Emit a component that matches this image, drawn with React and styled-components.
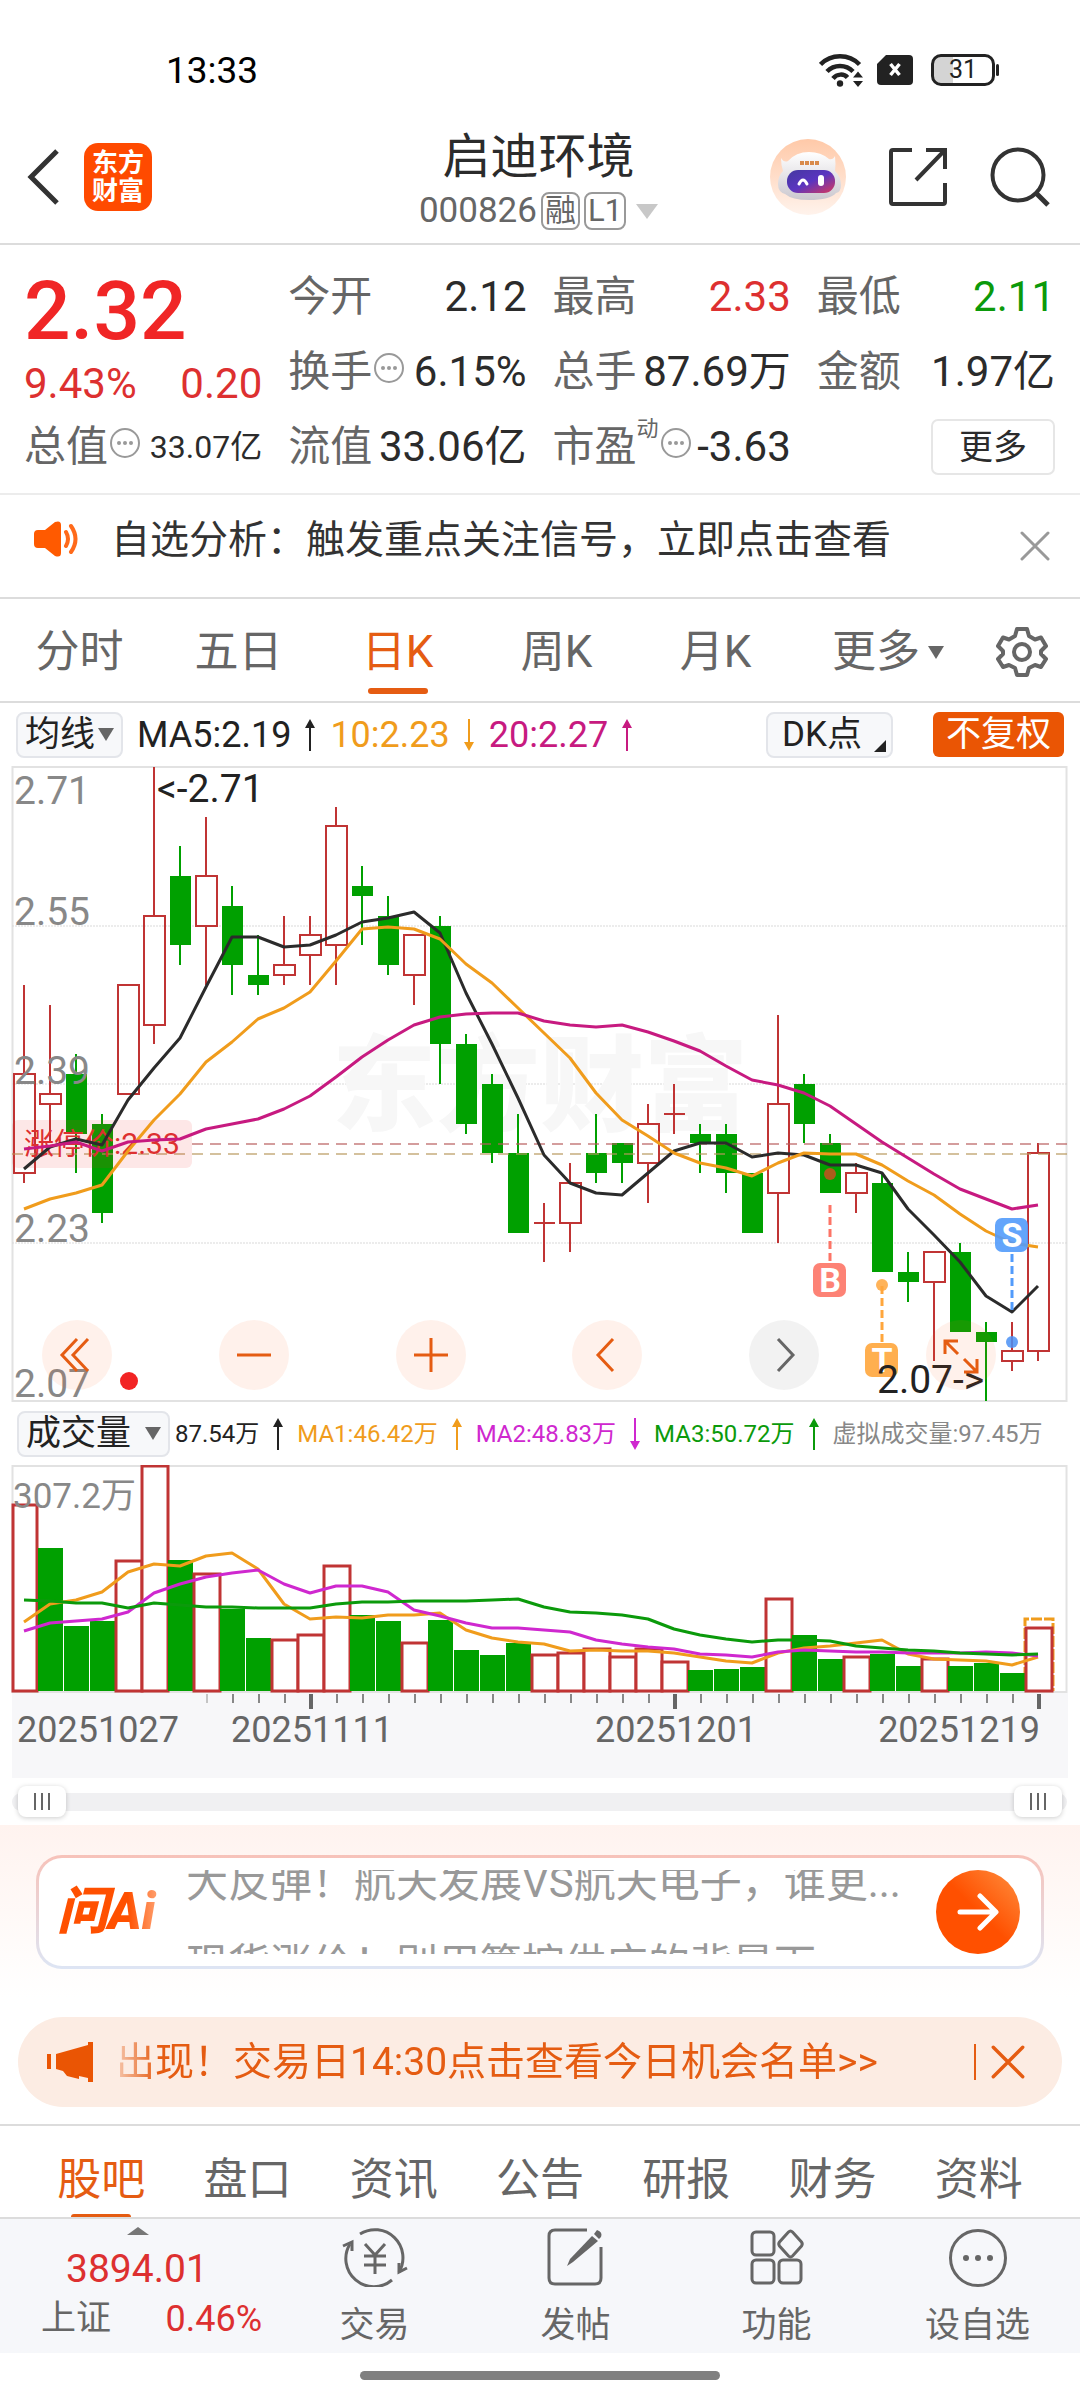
import React, { useState } from "react";
import styled, { createGlobalStyle } from "styled-components";

const GlobalStyle = createGlobalStyle`
  body {
    margin: 0;
    background-color: #fff;
    color: #2b2b2b;
    font-family: Roboto, "Noto Sans CJK SC", sans-serif;
  }

  * {
    box-sizing: border-box;
  }

  button {
    padding: 0;
    border: none;
    background: none;
    color: inherit;
    font: inherit;
    cursor: pointer;
    white-space: nowrap;
  }

  svg {
    display: block;
  }
`;

const RED = "#dd3030";
const GREEN = "#0b9a0b";
const ORANGE = "#e55c12";
const CANDLE_RED = "#c03434";
const CANDLE_GREEN = "#00a000";

/* ---------- status bar and header ---------- */

const Page = styled.div`
  display: flex;
  flex-direction: column;
  overflow: hidden;
`;

const StatusBar = styled.div`
  height: 108px;
  padding: 32px 85px 0 166px;
  display: flex;
  justify-content: space-between;
  align-items: center;
  color: #000;
  font-size: 37px;
`;

const StatusIcons = styled.div`
  display: flex;
  align-items: center;
  gap: 14px;
`;

const Battery = styled.div`
  position: relative;
  width: 64px;
  height: 32px;
  margin-left: 4px;
  border: 3px solid #222;
  border-radius: 10px;
  background: linear-gradient(90deg, #d4d4d4 32%, #fff 32%);
  color: #222;
  font-size: 25px;
  line-height: 26px;
  text-align: center;

  &::after {
    content: "";
    position: absolute;
    top: 7px;
    right: -7px;
    width: 3px;
    height: 12px;
    border-radius: 2px;
    background-color: #222;
  }
`;

const Header = styled.header`
  height: 137px;
  padding: 0 30px 0 27px;
  display: grid;
  grid-template-columns: 1fr auto 1fr;
  align-items: center;
  border-bottom: 2px solid #dcdcdc;
`;

const HeaderSide = styled.div`
  display: flex;
  align-items: center;
  gap: ${(props) => props.$gap}px;
  padding-top: 2px;
  justify-content: ${(props) => (props.$right ? "flex-end" : "flex-start")};
`;

const AppLogo = styled.div`
  width: 68px;
  height: 68px;
  border-radius: 14px;
  background-color: #ff4a00;
  color: #fff;
  font-size: 26px;
  font-weight: 700;
  line-height: 28px;
  text-align: center;
  display: grid;
  place-content: center;
`;

const TitleBlock = styled.div`
  padding-top: 11px;
  display: flex;
  flex-direction: column;
  align-items: center;
`;

const Title = styled.h1`
  margin: 0;
  font-size: 48px;
  font-weight: 400;
  line-height: 60px;
`;

const Code = styled.button`
  display: flex;
  align-items: center;
  gap: 4px;
  color: #666;
  font-size: 35px;
  line-height: 48px;
`;

const CodeTag = styled.span`
  height: 38px;
  padding: 0 2px;
  border: 2px solid #999;
  border-radius: 8px;
  font-size: 31px;
  line-height: 34px;
`;

const CodeArrow = styled.span`
  margin-left: 6px;
  border: 11px solid transparent;
  border-top: 15px solid #c8c8c8;
  border-bottom: 0;
`;

/* ---------- quote ---------- */

const Quote = styled.section`
  padding: 14px 25px 9px 24px;
  display: grid;
  grid-template-columns: 238fr 238fr 238fr 238fr;
  grid-template-rows: repeat(3, 75px);
  column-gap: 26px;
  border-bottom: 2px solid #ececec;
`;

const PriceBlock = styled.div`
  grid-row: span 2;
  display: flex;
  flex-direction: column;
  justify-content: space-between;
  color: ${RED};
  font-size: 42px;
  line-height: 48px;
`;

const Price = styled.strong`
  padding-top: 16px;
  color: #f02626;
  font-size: 82px;
  font-weight: 500;
  line-height: 72px;
`;

const PriceChange = styled.div`
  padding-bottom: 1px;
  display: flex;
  justify-content: space-between;
`;

const Cell = styled.div`
  display: flex;
  align-items: center;
  white-space: nowrap;
  color: #666;
  font-size: 42px;
  line-height: 56px;

  svg {
    flex: none;
  }
`;

const CellValue = styled.span`
  margin-left: auto;
  color: ${(props) => props.$color || "#2b2b2b"};
  font-size: ${(props) => (props.$small ? 32 : 42)}px;
`;

const Sup = styled.sup`
  align-self: flex-start;
  font-size: 22px;
  line-height: 40px;
`;

const MoreButton = styled.button`
  width: 124px;
  height: 56px;
  margin-left: auto;
  border: 2px solid #e6e6e6;
  border-radius: 7px;
  color: #2b2b2b;
  font-size: 34px;
  line-height: 50px;
`;

/* ---------- alert row ---------- */

const Alert = styled.section`
  height: 104px;
  padding: 0 30px 0 32px;
  display: flex;
  align-items: center;
  border-bottom: 2px solid #dcdcdc;
`;

const AlertText = styled.a`
  flex: 1;
  padding: 0 0 13px 31px;
  color: #333;
  font-size: 39px;
  line-height: 54px;
  text-decoration: none;
  white-space: nowrap;
`;

const AlertSpeaker = styled.span`
  padding-bottom: 14px;
`;

const AlertClose = styled.button`
  color: #999;
`;

/* ---------- period tabs ---------- */

const PeriodTabs = styled.nav`
  height: 104px;
  display: grid;
  grid-template-columns: repeat(5, 159fr) 168fr 117fr;
  border-bottom: 2px solid #dcdcdc;
`;

const PeriodTab = styled.button`
  position: relative;
  display: flex;
  align-items: center;
  justify-content: center;
  gap: 8px;
  padding-top: 4px;
  padding-left: ${(props) => (props.$wide ? 18 : 0)}px;
  color: ${(props) => (props.$active ? ORANGE : "#666")};
  font-size: 44px;
  line-height: 60px;

  &::after {
    content: "";
    display: ${(props) => (props.$active ? "block" : "none")};
    position: absolute;
    bottom: 7px;
    width: 60px;
    height: 6px;
    border-radius: 3px;
    background-color: ${ORANGE};
  }
`;

const Caret = styled.span`
  border: 8px solid transparent;
  border-top: 13px solid #666;
  border-bottom: 0;
`;

/* ---------- indicator rows ---------- */

const IndicatorRow = styled.div`
  height: 63px;
  padding: 0 16px;
  display: flex;
  align-items: center;
  gap: 14px;
  font-size: 36px;
  line-height: 44px;
  white-space: nowrap;
`;

const VolumeRow = styled(IndicatorRow)`
  padding: 0 0 0 17px;
  gap: 5px;
  font-size: 24px;
`;

const SmallButton = styled.button`
  height: 46px;
  padding: 0 7px;
  display: flex;
  align-items: center;
  gap: ${(props) => props.$gap || 0}px;
  border: 2px solid #e3e5ea;
  border-radius: 8px;
  background-color: #f7f8fa;
  color: #222;
  font-size: 35px;
  line-height: 42px;
`;

const DkButton = styled(SmallButton)`
  margin-left: auto;
  padding: 0 5px 0 14px;
`;

const DkCorner = styled.span`
  align-self: flex-end;
  margin: 0 0 4px 12px;
  border-left: 12px solid transparent;
  border-bottom: 12px solid #222;
`;

const AdjustButton = styled.button`
  height: 45px;
  margin-left: 26px;
  padding: 0 13px;
  border-radius: 6px;
  background-color: #ea5504;
  color: #fff;
  font-size: 35px;
  line-height: 45px;
`;

const Indicator = styled.span`
  display: flex;
  align-items: center;
  gap: 13px;
  color: ${(props) => props.$color};
`;

const VolumeIndicators = styled.div`
  flex: 1;
  display: flex;
  gap: 13px;
`;

/* ---------- charts ---------- */

const ChartArea = styled.div`
  position: relative;

  > svg {
    width: 100%;
    height: auto;
  }
`;

const ChartTools = styled.div`
  position: absolute;
  left: 42px;
  right: 84px;
  bottom: 12px;
  display: flex;
  justify-content: space-between;
`;

const ToolButton = styled.button`
  width: 70px;
  height: 70px;
  border-radius: 50%;
  display: grid;
  place-items: center;
  background-color: ${(props) => (props.$muted ? "rgba(0, 0, 0, 0.05)" : "rgba(255, 100, 30, 0.09)")};
  color: ${(props) => (props.$muted ? "#666" : ORANGE)};
`;

const RangeBar = styled.div`
  position: relative;
  height: 47px;
  margin: 0 13px 0 12px;
  display: flex;
  align-items: center;
`;

const RangeTrack = styled.div`
  width: 100%;
  height: 18px;
  border-radius: 9px;
  background-color: #f0f0f2;
`;

const RangeInput = styled.input`
  position: absolute;
  left: 6px;
  width: calc(100% - 11px);
  height: 47px;
  margin: 0;
  appearance: none;
  background: none;
  pointer-events: none;

  &::-webkit-slider-thumb {
    appearance: none;
    pointer-events: auto;
    width: 48px;
    height: 31px;
    border-radius: 8px;
    box-shadow: 0 1px 5px rgba(0, 0, 0, 0.2);
    background:
      linear-gradient(#666, #666) 16px 7px / 2px 17px no-repeat,
      linear-gradient(#666, #666) 23px 7px / 2px 17px no-repeat,
      linear-gradient(#666, #666) 30px 7px / 2px 17px no-repeat,
      #fff;
  }
`;

/* ---------- ask AI ---------- */

const AskSection = styled.section`
  padding: 30px 36px 48px;
  background: linear-gradient(#fff3ef, #fff 90%);
`;

const AskBox = styled.div`
  height: 114px;
  padding: 0 21px 0 18px;
  display: flex;
  align-items: center;
  border: 3px solid transparent;
  border-radius: 26px;
  background:
    linear-gradient(#fff, #fff) padding-box,
    linear-gradient(#f7c2b9, #dde5f4) border-box;
`;

const AskLogo = styled.span`
  width: 129px;
  font-size: 51px;
  font-style: italic;
  font-weight: 900;
  line-height: 60px;
  white-space: nowrap;
  color: transparent;
  background: linear-gradient(90deg, #ff5000 55%, #ff9a66 76%);
  background-clip: text;
`;

const AskTicker = styled.div`
  flex: 1;
  height: 84px;
  overflow: hidden;
  color: #999;
  font-size: 42px;
  line-height: 82px;
  white-space: nowrap;
`;

const AskLine = styled.p`
  margin: 0;

  &:first-child {
    margin-top: -28px;
  }
`;

const AskButton = styled.button`
  width: 84px;
  height: 84px;
  border-radius: 50%;
  display: grid;
  place-items: center;
  background: linear-gradient(45deg, #ff5000 50%, #ff9040);
  color: #fff;
`;

/* ---------- orange banner ---------- */

const Banner = styled.section`
  height: 90px;
  margin: 0 18px 17px;
  padding: 0 37px 0 29px;
  display: flex;
  align-items: center;
  border-radius: 45px;
  background-color: #fcece3;
  color: ${ORANGE};
`;

const BannerText = styled.a`
  flex: 1;
  padding-left: 23px;
  color: inherit;
  font-size: 39px;
  line-height: 56px;
  text-decoration: none;
  white-space: nowrap;
  mask-image: linear-gradient(90deg, rgba(0, 0, 0, 0.2) 20px, #000 64px);
`;

const BannerLine = styled.span`
  width: 2px;
  height: 36px;
  margin-right: 15px;
  background-color: ${ORANGE};
`;

/* ---------- bottom ---------- */

const InfoTabs = styled.nav`
  height: 93px;
  padding: 0 28px;
  display: grid;
  grid-template-columns: repeat(7, 1fr);
  overflow: hidden;
  border-top: 2px solid #dcdcdc;
`;

const InfoTab = styled.button`
  position: relative;
  display: flex;
  justify-content: center;
  padding-top: 22px;
  color: ${(props) => (props.$active ? ORANGE : "#666")};
  font-size: 44px;
  line-height: 64px;

  &::after {
    content: "";
    display: ${(props) => (props.$active ? "block" : "none")};
    position: absolute;
    bottom: -3px;
    width: 60px;
    height: 6px;
    border-radius: 3px;
    background-color: ${ORANGE};
  }
`;

const BottomBar = styled.footer`
  height: 136px;
  display: grid;
  grid-template-columns: 274fr repeat(4, 201fr) 2fr;
  border-top: 2px solid #dcdcdc;
  background-color: #f6f7fa;
`;

const IndexBlock = styled.button`
  padding: 8px 11px 0 41px;
  display: flex;
  flex-direction: column;
  align-items: flex-start;
  color: ${RED};
  font-size: 39px;
  line-height: 50px;

  > svg {
    margin-left: 86px;
  }
`;

const IndexValue = styled.span`
  padding: 9px 0 0 25px;
`;

const IndexLine = styled.span`
  width: 221px;
  display: flex;
  justify-content: space-between;
  font-size: 36px;
`;

const IndexName = styled.span`
  color: #666;
  font-size: 35px;
`;

const BottomItem = styled.button`
  padding-top: 8px;
  display: flex;
  flex-direction: column;
  align-items: center;
  gap: 14px;
  color: #666;
  font-size: 35px;
  line-height: 50px;
`;

const HomeIndicator = styled.div`
  width: 360px;
  height: 9px;
  margin: 18px auto 21px;
  border-radius: 5px;
  background-color: #808080;
`;

/* ---------- data ---------- */

// open, close, high, low in cents, volume in 万
const DAYS = [
  [230, 240, 249, 229, 254], [237, 238, 247, 233, 195], [240, 234, 242, 230, 88.5], [235, 226, 236, 225, 95],
  [238, 249, 249, 238, 179], [245, 256, 271, 243, 307.2], [260, 253, 263, 251, 179], [255, 260, 266, 249, 160],
  [257, 251, 259, 248, 111], [250, 249, 254, 248, 72], [250, 251, 256, 249, 71], [252, 254, 256, 249, 78],
  [253, 265, 267, 249, 172], [259, 258, 261, 253, 103], [256, 251, 258, 250, 95], [250, 254, 254, 247, 67],
  [255, 243, 256, 239, 96], [243, 235, 244, 234, 56], [239, 232, 240, 231, 49.5], [232, 224, 236, 224, 65],
  [225, 225, 227, 221, 51], [225, 229, 231, 222, 53.5], [232, 230, 236, 229, 59], [233, 231, 233, 229, 47],
  [231, 235, 237, 227, 59], [236, 236, 239, 234, 40.4], [234, 233, 235, 230, 29], [234, 230, 235, 228, 30.4],
  [230, 224, 230, 224, 32.2], [228, 237, 246, 223, 127], [239, 235, 240, 233, 75.8], [233, 228, 234, 228, 43.6],
  [228, 230, 231, 226, 48], [229, 220, 230, 220, 51], [220, 219, 222, 217, 33.6], [219, 222, 222, 211, 45],
  [222, 214, 223, 214, 34.5], [214, 213, 215, 207, 38], [211, 212, 215, 210, 24.5], [212, 232, 233, 211, 87.5],
];

// averages of the first days, which reach back before the first candle
const PRICE_LEAD = {
  5: [230.4, 232.6, 233.4, 232.8],
  10: [226.4, 227.4, 228, 228.8, 232.2, 235.4, 238, 241.2, 243.2],
  20: [232.4, 232.7, 233.1, 232.2, 233.1, 233.3, 233.4, 234.5, 235, 235.5, 236.5, 237.8, 239.7, 241.7, 243.4, 245, 245.8, 246.1, 246.2],
};

const VOLUME_LEAD = {
  5: [94, 119, 124, 135],
  10: [81, 92, 95, 98.5, 108, 133, 145, 155, 161],
  20: [123.4, 122, 120, 120, 113, 120, 117, 115, 115, 113.5, 112.5, 112.5, 119, 120.7, 121, 122, 123, 123, 123.4],
};

const dayX = (i) => 24 + i * 26;
const priceY = (p) => Math.round(635 - (p - 207) * 9.906);
const volumeY = (v) => Math.round(226 - v * 0.7346);

function averagePoints(values, size, lead, toY) {
  return values
    .map((_, i) => {
      const avg =
        i < lead.length ? lead[i] : values.slice(i - size + 1, i + 1).reduce((a, b) => a + b, 0) / size;
      return `${dayX(i)},${toY(avg)}`;
    })
    .join(" ");
}

const closes = DAYS.map((d) => d[1]);
const volumes = DAYS.map((d) => d[4]);

/* ---------- drawings ---------- */

function Candle({ day, index }) {
  const [open, close, high, low] = day;
  const x = dayX(index);
  const up = close >= open;
  const color = up ? CANDLE_RED : CANDLE_GREEN;
  const top = priceY(Math.max(open, close));
  const bottom = priceY(Math.min(open, close));
  return (
    <g stroke={color} strokeWidth="2">
      <line x1={x} x2={x} y1={priceY(high)} y2={top} />
      <line x1={x} x2={x} y1={bottom} y2={priceY(low)} />
      {open === close ? (
        <line x1={x - 10} x2={x + 11} y1={top} y2={top} />
      ) : up ? (
        <rect x={x - 10} y={top} width="21" height={bottom - top} fill="none" />
      ) : (
        <rect x={x - 10} y={top} width="21" height={bottom - top} fill={color} stroke="none" />
      )}
    </g>
  );
}

function Marker({ letter, x, y, color, dotY, dotColor, from, to }) {
  return (
    <g>
      <line x1={x} x2={x} y1={from} y2={to} stroke={color} strokeWidth="3" strokeDasharray="8 4" />
      <circle cx={x} cy={dotY} r="6" fill={dotColor} fillOpacity="0.85" />
      <rect x={x - 17} y={y - 17} width="33" height="34" rx="7" fill={color} fillOpacity="0.9" />
      <text x={x} y={y + 12} fill="#fff" fontSize="34" fontWeight="700" textAnchor="middle">
        {letter}
      </text>
    </g>
  );
}

function PriceChart() {
  return (
    <svg viewBox="0 0 1080 636">
      <rect x="12.5" y="1" width="1054" height="634" fill="none" stroke="#e2e2e2" strokeWidth="2" />
      {[255, 239, 223].map((p) => (
        <line key={p} x1="12" x2="1067" y1={priceY(p)} y2={priceY(p)} stroke="#d9d9d9" strokeDasharray="2 1" />
      ))}
      <text x="332" y="357" fontSize="104" fontWeight="900" fill="#f7f7f7">东方财富</text>
      {DAYS.map((day, i) => (
        <Candle key={i} day={day} index={i} />
      ))}
      <line x1="192" x2="1067" y1="378" y2="378" stroke="#b85c5c" strokeOpacity="0.6" strokeWidth="2" strokeDasharray="11 7" />
      <line x1="12" x2="1067" y1="388" y2="388" stroke="#b8985c" strokeOpacity="0.6" strokeWidth="2" strokeDasharray="11 7" />
      <rect x="12" y="354" width="180" height="48" rx="6" fill="#f02020" fillOpacity="0.11" />
      <text x="24" y="388" fontSize="30" fill={RED}>涨停价:2.33</text>
      <g fill="none" strokeWidth="3" strokeLinejoin="round">
        <polyline points={averagePoints(closes, 5, PRICE_LEAD[5], priceY)} stroke="#2b2b2b" />
        <polyline points={averagePoints(closes, 10, PRICE_LEAD[10], priceY)} stroke="#f09c1c" />
        <polyline points={averagePoints(closes, 20, PRICE_LEAD[20], priceY)} stroke="#c71a80" />
      </g>
      <g fontSize="39" fill="#888">
        <text x="14" y="38">2.71</text>
        <text x="14" y="159">2.55</text>
        <text x="14" y="318">2.39</text>
        <text x="14" y="476">2.23</text>
        <text x="14" y="631">2.07</text>
      </g>
      <text x="157" y="36" fontSize="39" fill="#222">&lt;-2.71</text>
      <Marker letter="B" x={830} y={514} color="#fd7466" from={439} to={496} dotY={408} dotColor="#c94f20" />
      <Marker letter="T" x={882} y={594} color="#ffa63c" from={520} to={576} dotY={519} dotColor="#ffa63c" />
      <Marker letter="S" x={1012} y={469} color="#529bfb" from={488} to={546} dotY={576} dotColor="#4a90f5" />
      <text x="877" y="627" fontSize="39" fill="#222">2.07-&gt;</text>
      <circle cx="129" cy="615" r="9" fill="#f22424" />
    </svg>
  );
}

function VolumeChart() {
  return (
    <svg viewBox="0 0 1080 313">
      <rect x="12" y="228" width="1056" height="85" fill="#f7f7f9" />
      <rect x="12.5" y="1" width="1054" height="226" fill="none" stroke="#e2e2e2" strokeWidth="2" />
      <path d="M1025 226 V154 H1053 V226" fill="none" stroke="#f09c1c" strokeWidth="3" strokeDasharray="11 2" />
      {DAYS.map((day, i) => {
        const x = dayX(i);
        const y = volumeY(day[4]);
        const up = i === 0 || day[1] >= DAYS[i - 1][1];
        return up ? (
          <rect key={i} x={Math.max(x - 12, 13)} y={y + 1} width={i ? 26 : 24} height={225 - y} fill="#fff" stroke={CANDLE_RED} strokeWidth="3" />
        ) : (
          <rect key={i} x={x - 12} y={y} width="25" height={226 - y} fill={CANDLE_GREEN} />
        );
      })}
      <g fill="none" strokeWidth="3" strokeLinejoin="round">
        <polyline points={averagePoints(volumes, 5, VOLUME_LEAD[5], volumeY)} stroke="#f09c1c" />
        <polyline points={averagePoints(volumes, 10, VOLUME_LEAD[10], volumeY)} stroke="#cf28cf" />
        <polyline points={averagePoints(volumes, 20, VOLUME_LEAD[20], volumeY)} stroke="#0b9a0b" />
      </g>
      <text x="13" y="43" fontSize="35" fill="#888">307.2万</text>
      {DAYS.map((_, i) => {
        if (i < 7) return null;
        const major = i === 11 || i === 25 || i === 39;
        return (
          <line key={i} x1={dayX(i) + 1} x2={dayX(i) + 1} y1="229" y2={major ? 244 : 238} stroke={i === 7 ? "#c4c4c4" : major ? "#666" : "#888"} strokeWidth={major ? 4 : 2} />
        );
      })}
      <g fontSize="36" fill="#666">
        <text x="17" y="277">20251027</text>
        <text x="231" y="277">20251111</text>
        <text x="595" y="277">20251201</text>
        <text x="1040" y="277" textAnchor="end">20251219</text>
      </g>
    </svg>
  );
}

function Arrow({ down }) {
  return (
    <svg width="12" height="34" viewBox="0 0 12 34">
      {down ? (
        <path d="M5 1h2v23h4l-5 9-5-9h4z" fill="currentColor" />
      ) : (
        <path d="M5 33h2V10h4L6 1 1 10h4z" fill="currentColor" />
      )}
    </svg>
  );
}

function InfoDots() {
  return (
    <svg width="32" height="40" viewBox="0 0 32 40" fill="#999">
      <circle cx="17" cy="16" r="14" fill="none" stroke="#999" strokeWidth="2" />
      <circle cx="11" cy="16" r="2" />
      <circle cx="17" cy="16" r="2" />
      <circle cx="23" cy="16" r="2" />
    </svg>
  );
}

function Cross({ size }) {
  return (
    <svg width={size} height={size} viewBox="0 0 30 30" stroke="currentColor" strokeWidth="3" strokeLinecap="round">
      <path d="M2 2 28 28M28 2 2 28" />
    </svg>
  );
}

function WifiIcon() {
  return (
    <svg width="44" height="34" viewBox="0 0 44 34" fill="none" stroke="#222" strokeWidth="4.5">
      <path d="M1.500 11.500C12 0.500 30 0.500 40.500 11.500" />
      <path d="M8 18.500C15 11 27 11 34 18.500" />
      <path d="M14 25.500C18 20.500 25 20.500 28.500 24.500" />
      <circle cx="21" cy="30.500" r="3.200" fill="#222" stroke="none" />
      <path d="M34 24.500 39 18.500 44 24.500zM34 28 39 34 44 28z" fill="#222" stroke="none" />
    </svg>
  );
}

function SimIcon() {
  return (
    <svg width="36" height="30" viewBox="0 0 36 30">
      <path d="M9 0H32Q36 0 36 4V26Q36 30 32 30H4Q0 30 0 26V9z" fill="#222" />
      <path d="M13.500 9 22.500 20M22.500 9 13.500 20" stroke="#fff" strokeWidth="3.500" />
    </svg>
  );
}

function RobotIcon() {
  return (
    <svg width="76" height="76" viewBox="0 0 76 76">
      <defs>
        <linearGradient id="halo" x1="0" y1="0" x2="0" y2="1">
          <stop offset="0" stopColor="#ffc9a8" />
          <stop offset="1" stopColor="#fff3ec" />
        </linearGradient>
        <linearGradient id="visor" x1="0" y1="0" x2="1" y2="1">
          <stop offset="0" stopColor="#4438a0" />
          <stop offset="0.5" stopColor="#5a35c0" />
          <stop offset="1" stopColor="#d8385c" />
        </linearGradient>
        <linearGradient id="helmet" x1="0" y1="0" x2="0" y2="1">
          <stop offset="0" stopColor="#ffffff" />
          <stop offset="1" stopColor="#cbc8cf" />
        </linearGradient>
      </defs>
      <circle cx="38" cy="38" r="38" fill="url(#halo)" />
      <path d="M11 19Q14 24 18 22Q26 13 39 13Q51 13 59 20Q63 21 65 17Q66 25 65 32Q71 38 71 46Q71 53 66 54Q60 61 39 61Q22 61 15 55Q8 53 8 45Q8 37 13 32Q11 26 11 19Z" fill="url(#helmet)" />
      <rect x="17" y="31" width="48" height="23" rx="11" fill="url(#visor)" />
      <path d="M29 45Q33 37 37 45" fill="none" stroke="#fff" strokeWidth="3" strokeLinecap="round" />
      <rect x="48" y="36" width="6" height="11" rx="3" fill="#fff" />
      <path d="M30 24H49" stroke="#d98a4a" strokeWidth="4" strokeDasharray="4 1" />
    </svg>
  );
}

function ShareIcon() {
  return (
    <svg width="60" height="60" viewBox="0 0 60 60" fill="none" stroke="#333" strokeWidth="4">
      <path d="M24 3H5Q3 3 3 5V55Q3 57 5 57H55Q57 57 57 55V36" />
      <path d="M38 3H57V22M57 3 28 33" />
    </svg>
  );
}

function SearchIcon() {
  return (
    <svg width="60" height="60" viewBox="0 0 60 60" fill="none" stroke="#333" strokeWidth="4">
      <circle cx="28" cy="28" r="25.500" />
      <path d="M46 46 58 58" strokeWidth="5" />
    </svg>
  );
}

function GearIcon() {
  return (
    <svg width="52" height="52" viewBox="0 0 52 52" fill="none" stroke="#666" strokeWidth="4" strokeLinejoin="round">
      <path d="M21 3H31L33 10L39 13.500L45 11.500L50 20L45 25V28L50 33L45 41L39 39L33 42L31 49H21L19 42L13 39L7 41L2 33L7 28V25L2 20L7 11.500L13 13.500L19 10Z" />
      <circle cx="26" cy="26" r="8" />
    </svg>
  );
}

function SpeakerIcon() {
  return (
    <svg width="48" height="38" viewBox="0 0 48 38">
      <path d="M6 10H13L23 2Q29 0 29 5V33Q29 38 23 36L13 28H6Q2 28 2 24V14Q2 10 6 10Z" fill="#ff5a00" />
      <path d="M34 12Q38 19 34 26M39 6Q48 19 39 32" fill="none" stroke="#ff6a1a" strokeWidth="4" strokeLinecap="round" />
    </svg>
  );
}

function MegaphoneIcon() {
  return (
    <svg width="46" height="40" viewBox="0 0 46 40" fill="#ea5504">
      <path d="M0 12H4V27H0zM9 12 41 3V0H46V40H41V36L32 34V37L20 34L16 29L9 27Z" />
    </svg>
  );
}

function ToolIcon({ name }) {
  const paths = {
    first: "M19 3 4 19 19 35M30 3 15 19 30 35",
    minus: "M2 19H36",
    plus: "M2 19H36M19 2V36",
    prev: "M25 3 10 19 25 35",
    next: "M13 3 28 19 13 35",
    expand: "M3 18V5H16M3 5 16 18M35 23V36H22M35 36 22 23",
  };
  return (
    <svg width="38" height="38" viewBox="0 0 38 38" fill="none" stroke="currentColor" strokeWidth="3">
      <path d={paths[name]} />
    </svg>
  );
}

function BottomIcon({ name }) {
  return (
    <svg width="66" height="60" viewBox="0 0 66 60" fill="none" stroke="#666" strokeWidth="3">
      {name === "trade" && (
        <>
          <path d="M18 7A28 28 0 0 1 57 45M50 53A28 28 0 0 1 8 17" />
          <path d="M1 19 10 15V24M65 41 57 45V36" />
          <path d="M23 17 33 28 43 17M22 29H44M22 38H44M33 28V47" />
        </>
      )}
      {name === "post" && (
        <>
          <path d="M44 3H12Q6 3 6 9V51Q6 57 12 57H52Q58 57 58 51V20" />
          <path d="M49 9 55 14 30 35 24 39 27 32Z" fill="#666" stroke="none" />
          <path d="M51 7 54 3Q60 5 58 10L56 12Z" fill="#666" stroke="none" />
        </>
      )}
      {name === "more" && (
        <>
          <rect x="8" y="5" width="22" height="23" rx="4" />
          <rect x="8" y="33" width="22" height="23" rx="4" />
          <rect x="35" y="33" width="22" height="23" rx="4" />
          <path d="M44.500 5Q46.500 3 48.500 5L57.500 15Q59 17 57.500 19L48.500 29Q46.500 31 44.500 29L35.500 19Q34 17 35.500 15Z" />
        </>
      )}
      {name === "add" && (
        <>
          <circle cx="33" cy="31" r="27.500" />
          <g fill="#666" stroke="none">
            <circle cx="21" cy="31" r="3" />
            <circle cx="33" cy="31" r="3" />
            <circle cx="45" cy="31" r="3" />
          </g>
        </>
      )}
    </svg>
  );
}

/* ---------- page ---------- */

const PERIODS = ["分时", "五日", "日K", "周K", "月K"];
const INFO = ["股吧", "盘口", "资讯", "公告", "研报", "财务", "资料"];
const TOOLS = [
  ["first", "最早"],
  ["minus", "缩小"],
  ["plus", "放大"],
  ["prev", "向前"],
  ["next", "向后"],
  ["expand", "全屏"],
];
const ACTIONS = [
  ["trade", "交易"],
  ["post", "发帖"],
  ["more", "功能"],
  ["add", "设自选"],
];

function QuotePanel() {
  return (
    <Quote>
      <PriceBlock>
        <Price>2.32</Price>
        <PriceChange>
          <span>9.43%</span>
          <span>0.20</span>
        </PriceChange>
      </PriceBlock>
      <Cell>今开<CellValue>2.12</CellValue></Cell>
      <Cell>最高<CellValue $color={RED}>2.33</CellValue></Cell>
      <Cell>最低<CellValue $color={GREEN}>2.11</CellValue></Cell>
      <Cell>换手<InfoDots /><CellValue>6.15%</CellValue></Cell>
      <Cell>总手<CellValue>87.69万</CellValue></Cell>
      <Cell>金额<CellValue>1.97亿</CellValue></Cell>
      <Cell>总值<InfoDots /><CellValue $small>33.07亿</CellValue></Cell>
      <Cell>流值<CellValue>33.06亿</CellValue></Cell>
      <Cell>市盈<Sup>动</Sup><InfoDots /><CellValue>-3.63</CellValue></Cell>
      <Cell><MoreButton>更多</MoreButton></Cell>
    </Quote>
  );
}

function App() {
  const [period, setPeriod] = useState("日K");
  const [info, setInfo] = useState("股吧");

  return (
    <Page>
      <GlobalStyle />
      <StatusBar>
        <span>13:33</span>
        <StatusIcons>
          <WifiIcon />
          <SimIcon />
          <Battery>31</Battery>
        </StatusIcons>
      </StatusBar>

      <Header>
        <HeaderSide $gap={24}>
          <button aria-label="返回">
            <svg width="33" height="56" viewBox="0 0 33 56" fill="none" stroke="#333" strokeWidth="5">
              <path d="M30 2 4 28 30 54" />
            </svg>
          </button>
          <AppLogo>
            <span>东方</span>
            <span>财富</span>
          </AppLogo>
        </HeaderSide>
        <TitleBlock>
          <Title>启迪环境</Title>
          <Code>
            000826
            <CodeTag>融</CodeTag>
            <CodeTag>L1</CodeTag>
            <CodeArrow />
          </Code>
        </TitleBlock>
        <HeaderSide $gap={42} $right>
          <button aria-label="智能助手"><RobotIcon /></button>
          <button aria-label="分享"><ShareIcon /></button>
          <button aria-label="搜索"><SearchIcon /></button>
        </HeaderSide>
      </Header>

      <QuotePanel />

      <Alert>
        <AlertSpeaker><SpeakerIcon /></AlertSpeaker>
        <AlertText href="#signal">自选分析：触发重点关注信号，立即点击查看</AlertText>
        <AlertClose aria-label="关闭"><Cross size={30} /></AlertClose>
      </Alert>

      <PeriodTabs>
        {PERIODS.map((name) => (
          <PeriodTab key={name} $active={period === name} onClick={() => setPeriod(name)}>
            {name}
          </PeriodTab>
        ))}
        <PeriodTab $wide>更多<Caret /></PeriodTab>
        <PeriodTab aria-label="设置"><GearIcon /></PeriodTab>
      </PeriodTabs>

      <IndicatorRow>
        <SmallButton $gap={3}>均线<Caret /></SmallButton>
        <Indicator $color="#222">MA5:2.19<Arrow /></Indicator>
        <Indicator $color="#f09c1c">10:2.23<Arrow down /></Indicator>
        <Indicator $color="#c71a80">20:2.27<Arrow /></Indicator>
        <DkButton>DK点<DkCorner /></DkButton>
        <AdjustButton>不复权</AdjustButton>
      </IndicatorRow>

      <ChartArea>
        <PriceChart />
        <ChartTools>
          {TOOLS.map(([name, label]) => (
            <ToolButton key={name} aria-label={label} $muted={name === "next"}>
              <ToolIcon name={name} />
            </ToolButton>
          ))}
        </ChartTools>
      </ChartArea>

      <VolumeRow>
        <SmallButton $gap={14}>成交量<Caret /></SmallButton>
        <VolumeIndicators>
          <Indicator $color="#222">87.54万<Arrow /></Indicator>
          <Indicator $color="#f09c1c">MA1:46.42万<Arrow /></Indicator>
          <Indicator $color="#cf28cf">MA2:48.83万<Arrow down /></Indicator>
          <Indicator $color={GREEN}>MA3:50.72万<Arrow /></Indicator>
          <Indicator $color="#888">虚拟成交量:97.45万</Indicator>
        </VolumeIndicators>
      </VolumeRow>

      <ChartArea>
        <VolumeChart />
      </ChartArea>

      <RangeBar>
        <RangeTrack />
        <RangeInput type="range" aria-label="开始日期" defaultValue="0" />
        <RangeInput type="range" aria-label="结束日期" defaultValue="100" />
      </RangeBar>

      <AskSection>
        <AskBox>
          <AskLogo>问Ai</AskLogo>
          <AskTicker>
            <AskLine>大反弹！航天发展VS航天电子，谁更...</AskLine>
            <AskLine>现货涨价！别用算控供应的背景下</AskLine>
          </AskTicker>
          <AskButton aria-label="提问">
            <svg width="42" height="38" viewBox="0 0 42 38" fill="none" stroke="#fff" strokeWidth="5" strokeLinecap="round" strokeLinejoin="round">
              <path d="M3 19H38M23 3 39 19 23 35" />
            </svg>
          </AskButton>
        </AskBox>
      </AskSection>

      <Banner>
        <MegaphoneIcon />
        <BannerText href="#chance">出现！交易日14:30点击查看今日机会名单&gt;&gt;</BannerText>
        <BannerLine />
        <button aria-label="关闭"><Cross size={34} /></button>
      </Banner>

      <InfoTabs>
        {INFO.map((name) => (
          <InfoTab key={name} $active={info === name} onClick={() => setInfo(name)}>
            {name}
          </InfoTab>
        ))}
      </InfoTabs>

      <BottomBar>
        <IndexBlock>
          <svg width="22" height="8" viewBox="0 0 22 8">
            <path d="M11 0 22 8H0z" fill="#777" />
          </svg>
          <IndexValue>3894.01</IndexValue>
          <IndexLine>
            <IndexName>上证</IndexName>
            <span>0.46%</span>
          </IndexLine>
        </IndexBlock>
        {ACTIONS.map(([name, label]) => (
          <BottomItem key={name}>
            <BottomIcon name={name} />
            {label}
          </BottomItem>
        ))}
      </BottomBar>
      <HomeIndicator />
    </Page>
  );
}

export default App;
